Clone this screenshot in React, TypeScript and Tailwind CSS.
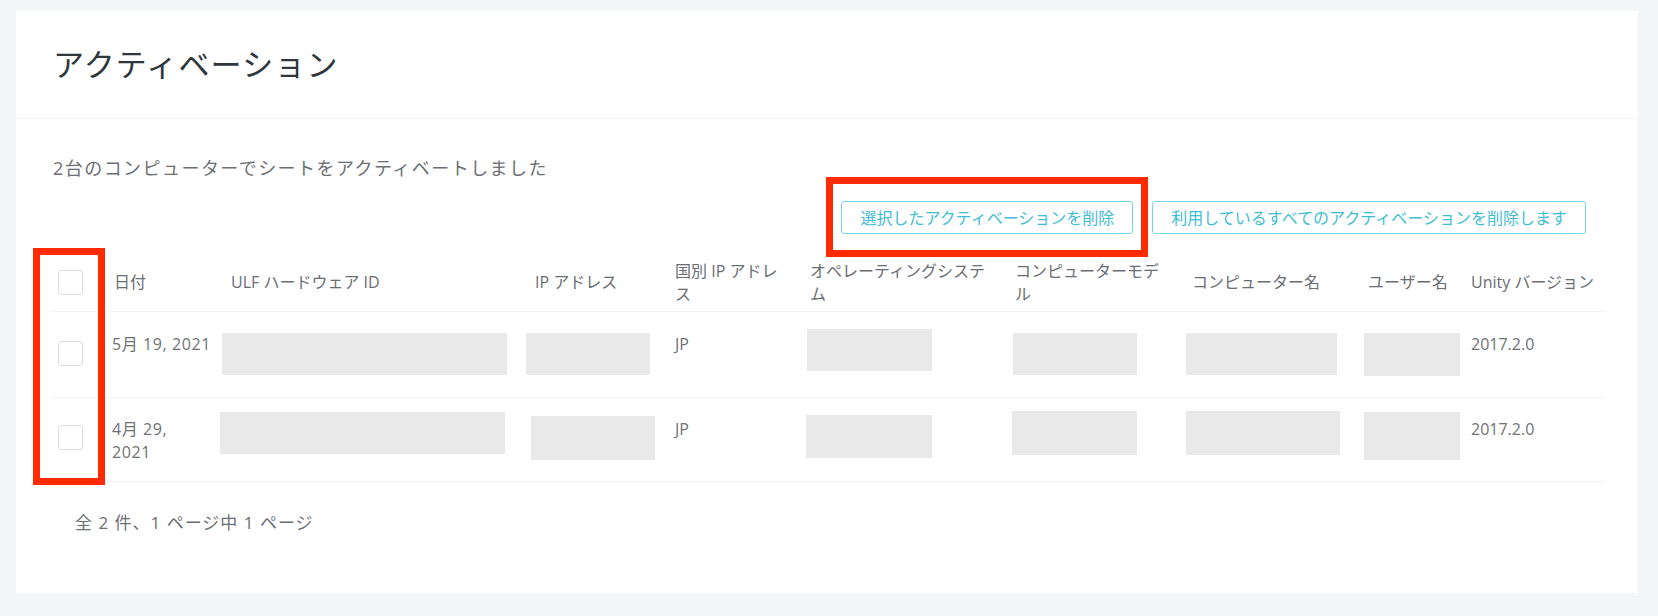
import React from "react";

const font = { fontFamily: '"Open Sans", "Noto Sans CJK JP", sans-serif' };

type Block = { ml: number; mt: number; w: number; h: number };

function Redact({ b }: { b: Block }) {
  return (
    <div
      className="bg-[#e9e9e9]"
      style={{ marginLeft: b.ml, marginTop: b.mt, width: b.w, height: b.h }}
    />
  );
}

function Checkbox({ className = "" }: { className?: string }) {
  return (
    <div
      className={`w-[25px] h-[25px] rounded-[3px] border border-[#dadee2] bg-white ${className}`}
    />
  );
}

const cols =
  "grid grid-cols-[60px_119px_304px_140px_135px_205px_177px_176px_103px_133px]";

type Row = {
  h: number;
  date: React.ReactNode;
  textTop: number;
  cbTop: number;
  ulf: Block;
  ip: Block;
  os: Block;
  model: Block;
  name: Block;
  user: Block;
};

const rows: Row[] = [
  {
    h: 86,
    date: "5月 19, 2021",
    textTop: 21,
    cbTop: 29,
    ulf: { ml: -9, mt: 21, w: 285, h: 42 },
    ip: { ml: -9, mt: 21, w: 124, h: 42 },
    os: { ml: -3, mt: 17, w: 125, h: 42 },
    model: { ml: -2, mt: 21, w: 124, h: 42 },
    name: { ml: -6, mt: 21, w: 151, h: 42 },
    user: { ml: -4, mt: 21, w: 96, h: 43 },
  },
  {
    h: 84,
    date: (
      <>
        4月 29,
        <br />
        2021
      </>
    ),
    textTop: 20,
    cbTop: 27,
    ulf: { ml: -11, mt: 14, w: 285, h: 42 },
    ip: { ml: -4, mt: 18, w: 124, h: 44 },
    os: { ml: -4, mt: 17, w: 126, h: 43 },
    model: { ml: -3, mt: 13, w: 125, h: 44 },
    name: { ml: -6, mt: 13, w: 154, h: 44 },
    user: { ml: -4, mt: 14, w: 96, h: 48 },
  },
];

export default function App() {
  const headerCell = "text-[16px] leading-[23px] text-[#6a6e72] pr-[20px]";
  const bodyText = "text-[16px] leading-[23px] text-[#6e7276]";
  return (
    <div
      className="min-h-screen bg-[#f3f6f7] pt-[11px] pl-[16px] pr-[20px] pb-[23px]"
      style={font}
    >
      <div className="relative bg-white">
        <div className="h-[108px] flex items-center pl-[37px] border-b border-[#f3f5f6]">
          <h1 className="text-[31px] tracking-[1.2px] text-[#2f363c] font-normal">
            アクティベーション
          </h1>
        </div>

        <div className="pl-[36px] pr-[34px] pt-[35px] pb-[58px]">
          <p className="pl-[1px] text-[18px] leading-[28px] tracking-[1.45px] text-[#6b6f73]">
            2台のコンピューターでシートをアクティベートしました
          </p>

          <div className="mt-[19px] flex justify-end gap-[19px] pr-[18px]">
            <button className="h-[33px] px-[18px] rounded-[3px] border border-[#72d6e6] text-[16px] text-[#3fbdd4] bg-white">
              選択したアクティベーションを削除
            </button>
            <button className="h-[33px] px-[18px] rounded-[3px] border border-[#72d6e6] text-[16px] text-[#3fbdd4] bg-white">
              利用しているすべてのアクティベーションを削除します
            </button>
          </div>

          <div className="mt-[20px]">
            <div className={`${cols} h-[58px] items-center border-b border-[#f1f3f5]`}>
              <div className="pl-[6px]">
                <Checkbox />
              </div>
              <div className={`${headerCell} pl-[2px]`}>日付</div>
              <div className={headerCell}>ULF ハードウェア ID</div>
              <div className={headerCell}>IP アドレス</div>
              <div className={headerCell}>国別 IP アドレス</div>
              <div className={headerCell}>オペレーティングシステム</div>
              <div className={headerCell}>コンピューターモデル</div>
              <div className={headerCell}>コンピューター名</div>
              <div className={headerCell}>ユーザー名</div>
              <div className="text-[16px] leading-[23px] text-[#6a6e72]">Unity バージョン</div>
            </div>

            {rows.map((r, i) => (
              <div
                key={i}
                className={`${cols} items-start border-b border-[#f1f3f5]`}
                style={{ height: r.h }}
              >
                <div className="pl-[6px]" style={{ paddingTop: r.cbTop }}>
                  <Checkbox />
                </div>
                <div
                  className={`${bodyText} tracking-[0.6px] whitespace-nowrap`}
                  style={{ paddingTop: r.textTop }}
                >
                  {r.date}
                </div>
                <div>
                  <Redact b={r.ulf} />
                </div>
                <div>
                  <Redact b={r.ip} />
                </div>
                <div className={bodyText} style={{ paddingTop: r.textTop }}>
                  JP
                </div>
                <div>
                  <Redact b={r.os} />
                </div>
                <div>
                  <Redact b={r.model} />
                </div>
                <div>
                  <Redact b={r.name} />
                </div>
                <div>
                  <Redact b={r.user} />
                </div>
                <div className={bodyText} style={{ paddingTop: r.textTop }}>
                  2017.2.0
                </div>
              </div>
            ))}
          </div>

          <p className="mt-[29px] pl-[23px] text-[17px] leading-[24px] tracking-[1px] text-[#6b6f73]">
            全 2 件、1 ページ中 1 ページ
          </p>
        </div>

        <div className="absolute left-[810px] top-[166px] w-[322px] h-[80px] border-[7px] border-[#ff2a00]" />
        <div className="absolute left-[17px] top-[237px] w-[72px] h-[237px] border-[7px] border-[#ff2a00]" />
      </div>
    </div>
  );
}
